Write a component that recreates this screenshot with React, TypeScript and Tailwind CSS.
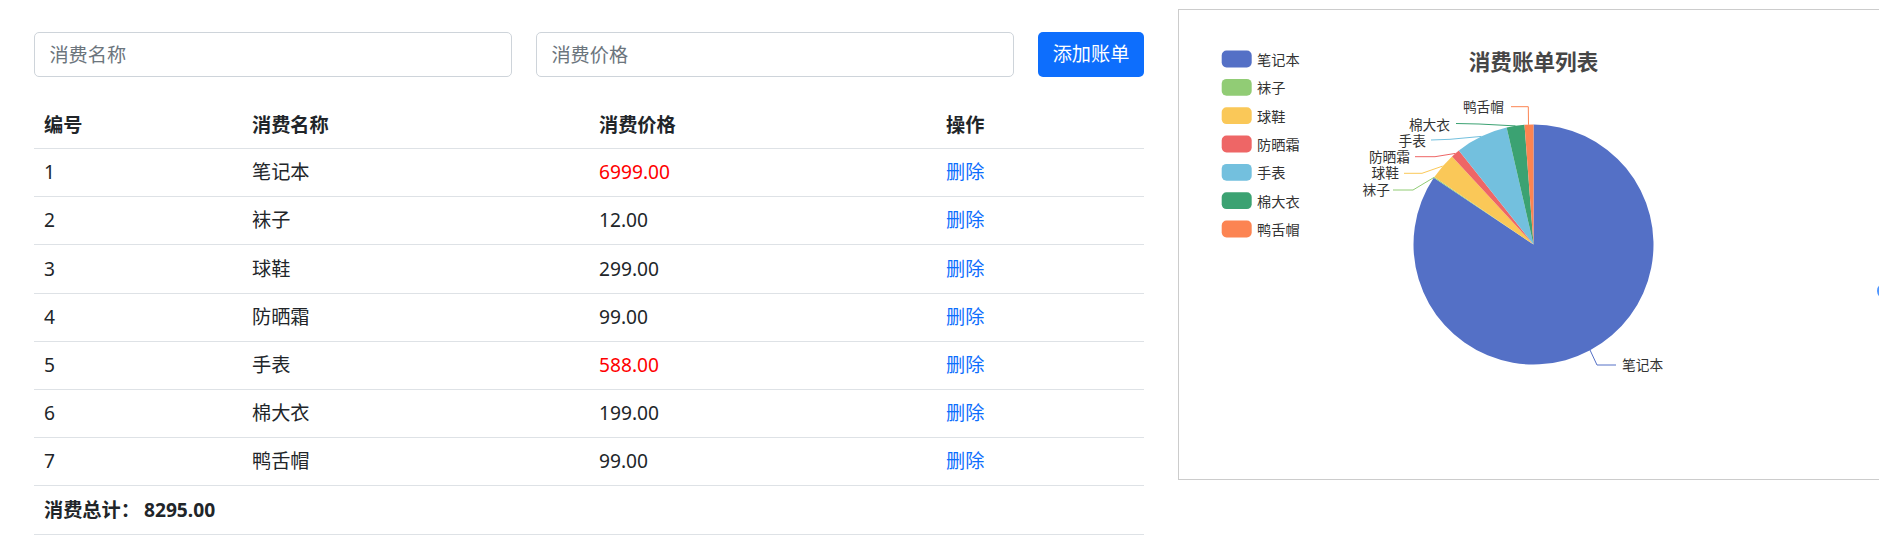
import React from 'react';

const bills = [
  { id: 1, name: '笔记本', price: 6999 },
  { id: 2, name: '袜子', price: 12 },
  { id: 3, name: '球鞋', price: 299 },
  { id: 4, name: '防晒霜', price: 99 },
  { id: 5, name: '手表', price: 588 },
  { id: 6, name: '棉大衣', price: 199 },
  { id: 7, name: '鸭舌帽', price: 99 },
];

const colors = ['#5470c6', '#91cc75', '#fac858', '#ee6666', '#73c0de', '#3ba272', '#fc8452'];

// label text anchor point + guide line points, measured off the chart
const labels: { x: number; y: number; anchor: 'start' | 'end'; line: string }[] = [
  { x: 443, y: 354, anchor: 'start', line: '411,340 418,355 437,355' },
  { x: 211, y: 179, anchor: 'end', line: '214,180 234,180 255,167.4' },
  { x: 220, y: 162, anchor: 'end', line: '225,163.3 243,163.3 263.6,156.1' },
  { x: 231, y: 146, anchor: 'end', line: '236,146.7 256,146.7 276.4,143.4' },
  { x: 247, y: 130, anchor: 'end', line: '252,130 271,129.3 302.5,126.4' },
  { x: 271, y: 113.5, anchor: 'end', line: '277,113.5 300,114 336.5,115.9' },
  { x: 325, y: 96, anchor: 'end', line: '332,96.7 349.3,96.7 349.5,114.8' },
];

const cx = 354.5;
const cy = 234.5;
const r = 120;

const pt = (deg: number) => {
  const rad = (deg * Math.PI) / 180;
  return [cx + r * Math.sin(rad), cy - r * Math.cos(rad)];
};

const PieChart: React.FC = () => {
  const total = bills.reduce((s, b) => s + b.price, 0);
  let start = 0;
  const slices = bills.map((b, i) => {
    const sweep = (b.price / total) * 360;
    const [x0, y0] = pt(start);
    const [x1, y1] = pt(start + sweep);
    const d = `M${cx} ${cy} L${x0} ${y0} A${r} ${r} 0 ${sweep > 180 ? 1 : 0} 1 ${x1} ${y1} Z`;
    start += sweep;
    return <path key={b.id} d={d} fill={colors[i]} />;
  });

  return (
    <svg width="709" height="469" className="block" fontFamily="'Noto Sans CJK SC', 'Noto Sans', sans-serif">
      <text x={cx} y={50} textAnchor="middle" dominantBaseline="central" fontSize="21.6" fontWeight="bold" fill="#464646">
        消费账单列表
      </text>
      {bills.map((b, i) => (
        <g key={b.id}>
          <rect x={42.7} y={49 - 8.4 + i * 28.33} width={30} height={16.8} rx={4.8} fill={colors[i]} />
          <text x={78} y={49 + i * 28.33} dominantBaseline="central" fontSize="14.2" fill="#333">
            {b.name}
          </text>
        </g>
      ))}
      {slices}
      {bills.map((b, i) => (
        <g key={b.id}>
          <polyline points={labels[i].line} fill="none" stroke={colors[i]} strokeWidth={1} />
          <text x={labels[i].x} y={labels[i].y} textAnchor={labels[i].anchor} dominantBaseline="central" fontSize="13.7" fill="#333">
            {b.name}
          </text>
        </g>
      ))}
    </svg>
  );
};

export default function App() {
  const total = bills.reduce((s, b) => s + b.price, 0);

  return (
    <div className="relative w-full h-[547px] overflow-hidden bg-white flex items-start font-['Noto_Sans','Noto_Sans_CJK_SC',sans-serif] text-[19.2px] text-[#212529]">
      <div className="w-[1110px] ml-[34px] mt-[32px] shrink-0">
        <div className="flex gap-[24px] h-[45px]">
          <input
            placeholder="消费名称"
            className="w-[478px] h-full border border-[#ced4da] rounded-[5px] px-[14.4px] outline-none placeholder:text-[#6c757d]"
          />
          <input
            placeholder="消费价格"
            className="w-[478px] h-full border border-[#ced4da] rounded-[5px] px-[14.4px] outline-none placeholder:text-[#6c757d]"
          />
          <button className="w-[106px] h-full rounded-[5px] bg-[#0d6efd] text-white">添加账单</button>
        </div>

        <div className="mt-[25px]">
          <div className="grid grid-cols-[208px_347px_347px_208px] h-[47px] items-center border-b border-[#dee2e6] font-bold">
            <div className="pl-[10px]">编号</div>
            <div className="pl-[10px]">消费名称</div>
            <div className="pl-[10px]">消费价格</div>
            <div className="pl-[10px]">操作</div>
          </div>
          {bills.map(b => (
            <div key={b.id} className="grid grid-cols-[208px_347px_347px_208px] h-[48.2px] items-center border-b border-[#dee2e6]">
              <div className="pl-[10px]">{b.id}</div>
              <div className="pl-[10px]">{b.name}</div>
              <div className={b.price > 500 ? 'pl-[10px] text-[#ff0000]' : 'pl-[10px]'}>{b.price.toFixed(2)}</div>
              <div className="pl-[10px]">
                <a className="text-[#0d6efd] cursor-pointer">删除</a>
              </div>
            </div>
          ))}
          <div className="h-[48.2px] flex items-center border-b border-[#dee2e6] pl-[10px] font-bold">
            消费总计：<span className="ml-[4px]">{total.toFixed(2)}</span>
          </div>
        </div>
      </div>

      <div className="ml-[34px] mt-[9px] w-[711px] h-[471px] border border-[#ccc] shrink-0">
        <PieChart />
      </div>

      <div className="fixed left-[1877px] top-[282px] w-[18px] h-[18px] rounded-full border-2 border-[#4d94ff]" />
    </div>
  );
}
